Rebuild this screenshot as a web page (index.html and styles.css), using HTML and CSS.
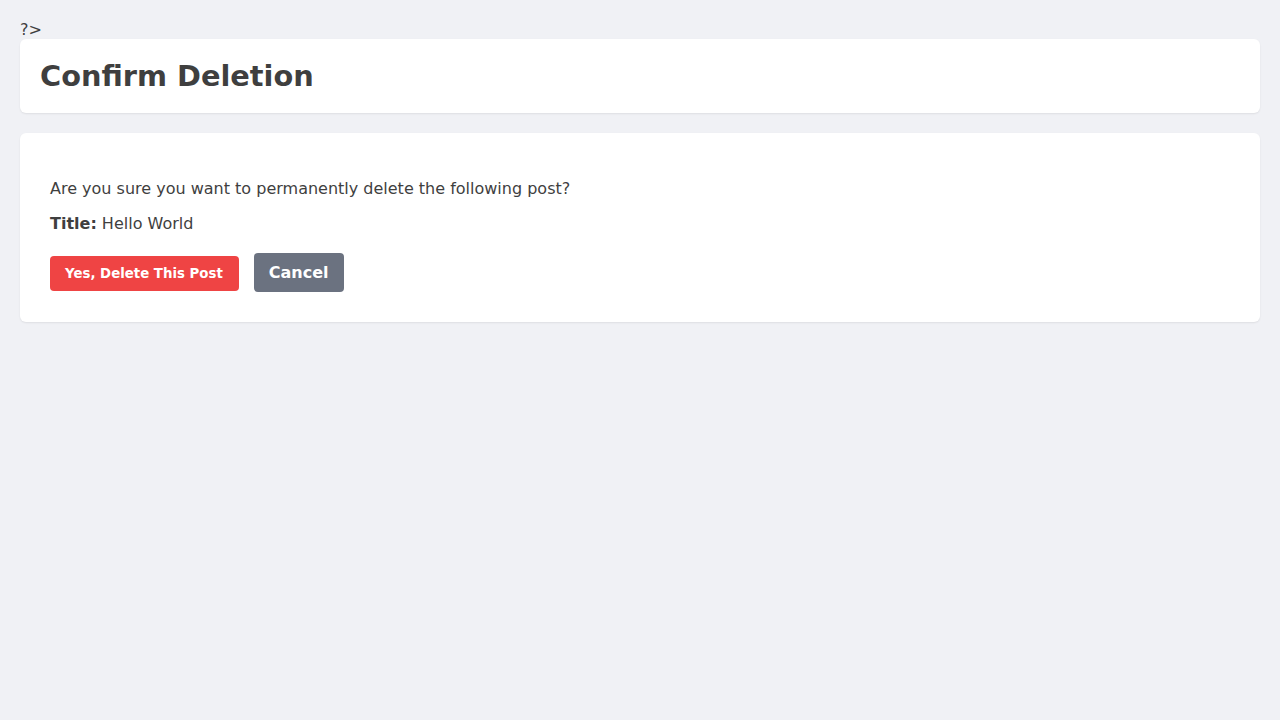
FILE: index.html
```html
<!DOCTYPE html>
<html lang="en">
<head>
<meta charset="utf-8">
<title>Confirm Deletion</title>
<link rel="stylesheet" href="styles.css">
</head>
<body>
?&gt;
<div class="card header-card">
  <h1 class="page-title">Confirm Deletion</h1>
</div>
<div class="card body-card">
  <p class="text">Are you sure you want to permanently delete the following post?</p>
  <p class="text"><strong>Title:</strong> Hello World</p>
  <div class="actions">
    <button class="btn btn-danger" type="button">Yes, Delete This Post</button>
    <a class="btn btn-secondary" href="#">Cancel</a>
  </div>
</div>
</body>
</html>
```
FILE: styles.css
```css
html, body {
  margin: 0;
}
body {
  padding: 20px;
  background: #f0f1f5;
  font-family: "DejaVu Sans", sans-serif;
  font-size: 16px;
  color: #3f3f3f;
}
.card {
  background: #ffffff;
  border-radius: 6px;
  box-shadow: 0 1px 2px rgba(0, 0, 0, 0.08);
  margin-bottom: 20px;
}
.header-card {
  padding: 20px;
}
.page-title {
  margin: 0;
  font-size: 28.8px;
  line-height: 34px;
  font-weight: bold;
  color: #3f3f3f;
}
.body-card {
  padding: 30px;
}
.text {
  margin: 16px 0;
  line-height: 19px;
}
.actions {
  display: flex;
  align-items: baseline;
  gap: 15px;
  margin-top: 20px;
}
.btn {
  display: inline-block;
  padding: 10px 15px;
  border: none;
  border-radius: 4px;
  color: #ffffff;
  font-family: "DejaVu Sans", sans-serif;
  font-weight: bold;
  text-decoration: none;
}
.btn-danger {
  background: #ef4444;
  font-size: 13.3333px;
  line-height: 15px;
  padding-right: 16px;
}
.btn-secondary {
  background: #6b7280;
  font-size: 16px;
  line-height: 19px;
}
```
